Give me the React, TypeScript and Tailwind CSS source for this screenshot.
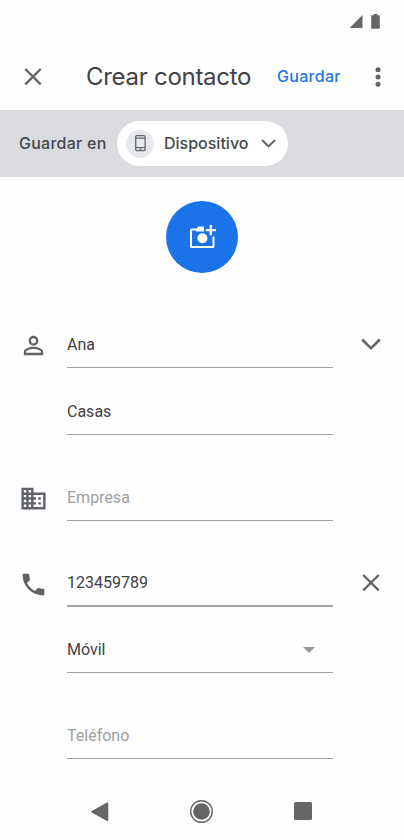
import React from 'react';
import { MdBusiness, MdPersonOutline, MdPhone } from 'react-icons/md';
import clsx from 'clsx';

interface FieldRowProps {
  value?: string;
  placeholder?: string;
  icon?: React.ReactNode;
  action?: React.ReactNode;
  focused?: boolean;
  dropdown?: boolean;
  className?: string;
}

function FieldRow({ value, placeholder, icon, action, focused, dropdown, className }: FieldRowProps) {
  return (
    <div className={clsx('flex items-end', className)}>
      <div className="w-[67px] shrink-0 pl-[19px] pb-[8px] text-[#5f6368]">{icon}</div>
      <div
        className={clsx(
          'w-[266px] shrink-0 flex items-center justify-between border-[#a3a3a3] text-base leading-6',
          focused ? 'border-b-2 pb-[10px]' : 'border-b pb-[10px]'
        )}
      >
        <span className={value ? 'text-[#3f4144]' : 'text-[#a0a0a0]'}>{value ?? placeholder}</span>
        {dropdown && (
          <svg className="mr-[18px]" width="12" height="6" viewBox="0 0 12 6">
            <path d="M0 0h12L6 6z" fill="#979797" />
          </svg>
        )}
      </div>
      <div className="flex-1 flex justify-center pl-[4px] pb-[14px]">{action}</div>
    </div>
  );
}

function CloseIcon() {
  return (
    <svg width="20" height="20" viewBox="0 0 20 20" fill="none" stroke="#5f6368" strokeWidth="2.3">
      <path d="M2.3 2l15.4 15.4M17.7 2L2.3 17.4" />
    </svg>
  );
}

function AddPhotoIcon() {
  return (
    <svg className="ml-px" width="26" height="24" viewBox="0 0 26 24" fill="none">
      <path
        d="M14 4.5H1.9a.9.9 0 0 0-.9.9v15.8a.9.9 0 0 0 .9.9h20.7a.9.9 0 0 0 .9-.9V11.5"
        stroke="#fff"
        strokeWidth="2"
      />
      <path d="M6 4.5L8.3 1.5H14v5H6z" fill="#fff" />
      <circle cx="12.4" cy="13.2" r="5" fill="#fff" />
      <path d="M20.8 0v10.2M15.8 5.1h10" stroke="#fff" strokeWidth="2.3" />
    </svg>
  );
}

export default function App() {
  return (
    <div className="w-[404px] h-[840px] bg-[#fefefe] flex flex-col overflow-hidden font-[Roboto,sans-serif]">
      {/* Status bar */}
      <div className="h-[43px] shrink-0 flex justify-end items-start gap-[8px] pt-[14px] pr-[24px]">
        <svg className="mt-px" width="14" height="14" viewBox="0 0 14 14">
          <path d="M13.5 0v13H.5z" fill="#666" />
        </svg>
        <svg width="9" height="15" viewBox="0 0 9 15">
          <path d="M2.6 0h3.8v1.2H8a.8.8 0 0 1 .8.8v12a.8.8 0 0 1-.8.8H1a.8.8 0 0 1-.8-.8V2a.8.8 0 0 1 .8-.8h1.6z" fill="#666" />
        </svg>
      </div>

      {/* App bar */}
      <div className="h-[67px] shrink-0 flex items-center pl-[23px] pr-[23px] font-[Inter,sans-serif]">
        <CloseIcon />
        <h1 className="ml-[43px] w-[191px] text-[24px] leading-8 tracking-[-0.28px] text-[#3f4246] whitespace-nowrap">
          Crear contacto
        </h1>
        <button className="pb-[2px] text-[16px] font-medium tracking-[0.3px] text-[#2577e3]">Guardar</button>
        <svg className="ml-auto" width="6" height="20" viewBox="0 0 6 20" fill="#5f6368">
          <circle cx="3" cy="2.8" r="2.5" />
          <circle cx="3" cy="10" r="2.5" />
          <circle cx="3" cy="17.2" r="2.5" />
        </svg>
      </div>

      {/* Account picker */}
      <div className="h-[67px] shrink-0 flex items-center bg-[#dadbdf] pl-[19px] text-[#45484c] font-[Inter,sans-serif]">
        <span className="w-[98px] pb-[2px] text-[16px] font-medium tracking-[0.25px] whitespace-nowrap">Guardar en</span>
        <div className="w-[171px] h-[45px] rounded-full bg-white flex items-center pl-[9px]">
          <div className="size-[28px] rounded-full bg-[#e7e8ec] flex items-center justify-center">
            <svg width="11" height="17" viewBox="0 0 11 17" fill="none">
              <rect x=".7" y=".7" width="9.4" height="15" rx="1.2" stroke="#66696d" strokeWidth="1.3" />
              <path d="M.7 3.1h9.4M.7 12.6h9.4" stroke="#66696d" strokeWidth="1.2" />
              <path d="M4.2 14.2h2.4" stroke="#66696d" />
            </svg>
          </div>
          <span className="ml-[10px] w-[97px] pb-[2px] text-[16px] font-medium">Dispositivo</span>
          <svg width="15" height="9" viewBox="0 0 15 9" fill="none">
            <path d="M1 1l6.5 6.5L14 1" stroke="#5f6368" strokeWidth="1.9" />
          </svg>
        </div>
      </div>

      {/* Photo */}
      <div className="h-[124px] shrink-0 flex justify-center pt-[24px]">
        <button className="size-[72px] rounded-full bg-[#1a73e8] flex items-center justify-center">
          <AddPhotoIcon />
        </button>
      </div>

      {/* Form */}
      <div className="h-[482px] shrink-0">
        <FieldRow
          className="h-[67px]"
          value="Ana"
          icon={<MdPersonOutline size={29} />}
          action={
            <svg width="20" height="20" viewBox="0 0 20 20" fill="none">
              <path d="M1.2 5.5l8.8 8.8 8.8-8.8" stroke="#5f6368" strokeWidth="2.5" />
            </svg>
          }
        />
        <FieldRow className="h-[67px]" value="Casas" />
        <FieldRow className="h-[86px]" placeholder="Empresa" icon={<MdBusiness size={29} />} />
        <FieldRow className="h-[86px]" value="123459789" focused icon={<MdPhone size={29} />} action={<CloseIcon />} />
        <FieldRow className="h-[66px]" value="Móvil" dropdown />
        <FieldRow className="h-[86px]" placeholder="Teléfono" />
      </div>

      {/* System navigation */}
      <div className="flex justify-between pl-[91px] pr-[92px] items-start pt-[17px]">
        <svg className="mt-[2px]" width="18" height="20" viewBox="0 0 18 20">
          <path d="M16.5 1.2v17.2L1 9.8z" fill="#666" stroke="#666" strokeWidth="1.6" strokeLinejoin="round" />
        </svg>
        <svg width="24" height="24" viewBox="0 0 24 24">
          <circle cx="11.5" cy="11.5" r="10.8" fill="none" stroke="#666" strokeWidth="1.4" />
          <circle cx="11.5" cy="11.5" r="8.3" fill="#666" />
        </svg>
        <div className="mt-[2px] size-[18px] rounded-[1.5px] bg-[#666]" />
      </div>
    </div>
  );
}
